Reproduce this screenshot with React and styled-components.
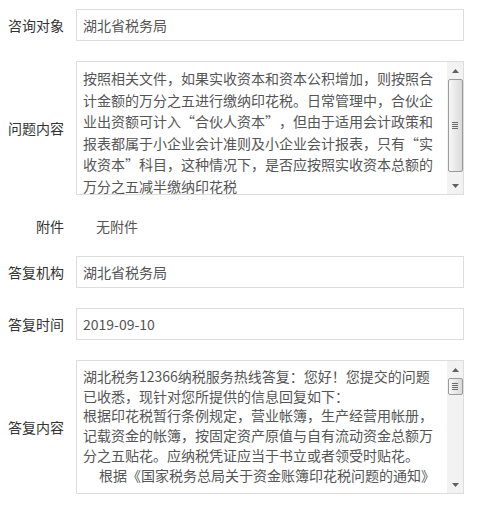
import styled, { createGlobalStyle } from 'styled-components';

const GlobalStyle = createGlobalStyle`
  body {
    margin: 0;
    background: #ffffff;
    font-family: "Noto Sans CJK SC", "Noto Sans", sans-serif;
    font-size: 14px;
  }
`;

const answer = [
  '湖北税务12366纳税服务热线答复：您好！您提交的问题',
  '已收悉，现针对您所提供的信息回复如下：',
  '根据印花税暂行条例规定，营业帐簿，生产经营用帐册，',
  '记载资金的帐簿，按固定资产原值与自有流动资金总额万',
  '分之五贴花。应纳税凭证应当于书立或者领受时贴花。',
];

function Arrow({ down }) {
  return (
    <svg width="7" height="4" viewBox="0 0 7 4">
      {down ? <path d="M0 0 H7 L3.5 4 Z" fill="#606060" /> : <path d="M0 4 H7 L3.5 0 Z" fill="#606060" />}
    </svg>
  );
}

function Scrollbar({ thumb }) {
  return (
    <Track>
      <ArrowBtn>
        <Arrow />
      </ArrowBtn>
      <Thumb $h={thumb}>
        <Grip>
          <i />
          <i />
          <i />
          <i />
        </Grip>
      </Thumb>
      <Fill />
      <ArrowBtn>
        <Arrow down />
      </ArrowBtn>
    </Track>
  );
}

function App() {
  return (
    <>
      <GlobalStyle />
      <Form>
        <Row>
          <Label>咨询对象</Label>
          <Input>湖北省税务局</Input>
        </Row>
        <Row>
          <Label>问题内容</Label>
          <Area>
            <Content $lh={21.5}>
              <div>按照相关文件，如果实收资本和资本公积增加，则按照合</div>
              <div>计金额的万分之五进行缴纳印花税。日常管理中，合伙企</div>
              <div>
                业出资额可计入<Quote $open>“</Quote>合伙人资本<Quote>”</Quote>，但由于适用会计政策和
              </div>
              <div>
                报表都属于小企业会计准则及小企业会计报表，只有<Quote $open>“</Quote>实
              </div>
              <div>
                收资本<Quote>”</Quote>科目，这种情况下，是否应按照实收资本总额的
              </div>
              <div>万分之五减半缴纳印花税</div>
            </Content>
            <Scrollbar thumb={93} />
          </Area>
        </Row>
        <Row $short>
          <Label>附件</Label>
          <Plain>无附件</Plain>
        </Row>
        <Row>
          <Label>答复机构</Label>
          <Input>湖北省税务局</Input>
        </Row>
        <Row>
          <Label>答复时间</Label>
          <Input>2019-09-10</Input>
        </Row>
        <Row>
          <Label>答复内容</Label>
          <Area>
            <Content $lh={19.7}>
              {answer.map((line) => (
                <div key={line}>{line}</div>
              ))}
              <Indent>根据《国家税务总局关于资金账簿印花税问题的通知》</Indent>
            </Content>
            <Scrollbar thumb={17} />
          </Area>
        </Row>
      </Form>
    </>
  );
}

export default App;

const Form = styled.div`
  display: flex;
  flex-direction: column;
  gap: 20px;
  padding: 9px 16px 0 0;
  width: 480px;
  box-sizing: border-box;
`;

const Row = styled.div`
  display: flex;
  align-items: center;
  height: ${(p) => (p.$short ? '21px' : 'auto')};
`;

const Label = styled.div`
  width: 64px;
  flex-shrink: 0;
  margin-right: 12px;
  text-align: right;
  color: #333333;
  font-size: 14px;
  line-height: 20px;
  white-space: nowrap;
`;

const Input = styled.div`
  flex: 1;
  height: 32px;
  box-sizing: border-box;
  border: 1px solid #dddddd;
  padding: 0 7px 0 6px;
  display: flex;
  align-items: center;
  color: #555555;
  font-size: 14px;
`;

const Plain = styled.div`
  padding-left: 20px;
  color: #555555;
  font-size: 14px;
`;

const Area = styled.div`
  flex: 1;
  height: 134px;
  box-sizing: border-box;
  border: 1px solid #dddddd;
  display: flex;
  overflow: hidden;
`;

const Content = styled.div`
  flex: 1;
  overflow: hidden;
  padding: 6px 0 0 6px;
  color: #555555;
  font-size: 14px;
  line-height: ${(p) => p.$lh}px;
  white-space: nowrap;
`;

/* full-width quote cell, as the CJK font of the original draws it */
const Quote = styled.span`
  display: inline-block;
  width: 14px;
  text-align: ${(p) => (p.$open ? 'right' : 'left')};
`;

const Indent = styled.div`
  padding-left: 16px;
`;

const Track = styled.div`
  width: 16px;
  flex-shrink: 0;
  background: #f2f2f2;
  display: flex;
  flex-direction: column;
  align-items: center;
`;

const ArrowBtn = styled.div`
  height: 17px;
  width: 16px;
  display: flex;
  align-items: center;
  justify-content: center;
  flex-shrink: 0;
`;

const Fill = styled.div`
  flex: 1;
`;

const Thumb = styled.div`
  width: 15px;
  height: ${(p) => p.$h}px;
  box-sizing: border-box;
  border: 1px solid #9a9a9a;
  border-radius: 2px;
  background: linear-gradient(to right, #f7f7f7, #e6e6e6 60%, #dadada);
  display: flex;
  align-items: center;
  justify-content: center;
  flex-shrink: 0;
`;

const Grip = styled.div`
  display: flex;
  flex-direction: column;
  gap: 1px;

  i {
    display: block;
    width: 6px;
    height: 1px;
    background: #6a6a6a;
  }
`;
